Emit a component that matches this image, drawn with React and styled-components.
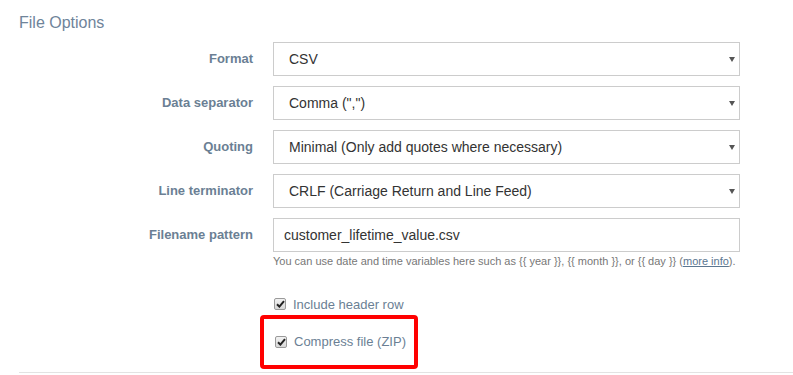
import React from 'react'
import styled, { createGlobalStyle } from 'styled-components'

const Global = createGlobalStyle`
  html, body { margin: 0; padding: 0; background: #fff; }
  body { font-family: "Liberation Sans", Arial, Helvetica, sans-serif; }
`

const Page = styled.div`
  width: 793px;
  height: 375px;
  overflow: hidden;
  padding: 13px 0 0 19px;
  box-sizing: border-box;
`

const Title = styled.h3`
  margin: 0 0 9px;
  font-size: 16px;
  line-height: 20px;
  font-weight: normal;
  color: #6f849a;
`

const Form = styled.div`
  display: flex;
  flex-direction: column;
  gap: 10px;
`

const Row = styled.div`
  display: grid;
  grid-template-columns: 234px 467px;
  column-gap: 20px;
  align-items: start;
`

const Label = styled.label`
  text-align: right;
  font-size: 13px;
  font-weight: bold;
  color: #6b7f94;
  line-height: 34px;
`

const Field = styled.div`
  display: flex;
  flex-direction: column;
`

const SelectWrap = styled.div`
  position: relative;
  &::after {
    content: "";
    position: absolute;
    right: 5px;
    top: 15px;
    border-left: 3px solid transparent;
    border-right: 3px solid transparent;
    border-top: 5px solid #555;
    pointer-events: none;
  }
`

const Select = styled.select`
  appearance: none;
  -webkit-appearance: none;
  width: 100%;
  height: 34px;
  box-sizing: border-box;
  border: 1px solid #ccc;
  border-radius: 0;
  background: #fff;
  padding: 0 20px 0 15px;
  font-family: inherit;
  font-size: 14px;
  color: #333;
  outline: none;
`

const Input = styled.input`
  width: 100%;
  height: 34px;
  box-sizing: border-box;
  border: 1px solid #ccc;
  border-radius: 0;
  padding: 0 10px;
  font-family: inherit;
  font-size: 14px;
  color: #333;
  outline: none;
`

const Help = styled.div`
  margin-top: 1px;
  font-size: 11px;
  line-height: 16px;
  color: #777;
  a { color: #5b7690; text-decoration: underline; }
`

const Checks = styled.div`
  display: flex;
  flex-direction: column;
  padding-left: 254px;
  margin-top: 26px;
`

const CheckRow = styled.div`
  display: flex;
  align-items: center;
  gap: 7px;
  height: 18px;
  padding-left: 1px;
`

const Highlight = styled.div`
  margin: 2px 0 0 -13px;
  width: 158px;
  height: 54px;
  box-sizing: border-box;
  border: 4px solid #ff0000;
  border-radius: 4px;
  display: flex;
  align-items: center;
  padding: 0 0 1px 10px;
`

const Box = styled.span`
  width: 10px;
  height: 10px;
  border: 1px solid #9a9a9a;
  border-radius: 2px;
  background: linear-gradient(#f2f2f2, #d8d8d8);
  display: flex;
  align-items: center;
  justify-content: center;
`

const CheckText = styled.span`
  font-size: 13px;
  color: #6b7f94;
`

const Divider = styled.hr`
  margin: 3px 0 0;
  border: 0;
  border-top: 1px solid #e3e3e3;
`

const Check = ({ children }) => (
  <CheckRow>
    <Box>
      <svg width="9" height="8" viewBox="0 0 9 8">
        <path d="M1 4.2 L3.4 6.6 L8 1.2" fill="none" stroke="#222" strokeWidth="2" />
      </svg>
    </Box>
    <CheckText>{children}</CheckText>
  </CheckRow>
)

const selects = [
  ['Format', 'CSV'],
  ['Data separator', 'Comma (",")'],
  ['Quoting', 'Minimal (Only add quotes where necessary)'],
  ['Line terminator', 'CRLF (Carriage Return and Line Feed)'],
]

export default function App() {
  return (
    <Page>
      <Global />
      <Title>File Options</Title>
      <Form>
        {selects.map(([label, value]) => (
          <Row key={label}>
            <Label>{label}</Label>
            <SelectWrap>
              <Select defaultValue={value}>
                <option>{value}</option>
              </Select>
            </SelectWrap>
          </Row>
        ))}
        <Row>
          <Label>Filename pattern</Label>
          <Field>
            <Input defaultValue="customer_lifetime_value.csv" />
            <Help>
              You can use date and time variables here such as {'{{ year }}'}, {'{{ month }}'}, or {'{{ day }}'} (<a href="#">more info</a>).
            </Help>
          </Field>
        </Row>
      </Form>
      <Checks>
        <Check>Include header row</Check>
        <Highlight>
          <Check>Compress file (ZIP)</Check>
        </Highlight>
      </Checks>
      <Divider />
    </Page>
  )
}
